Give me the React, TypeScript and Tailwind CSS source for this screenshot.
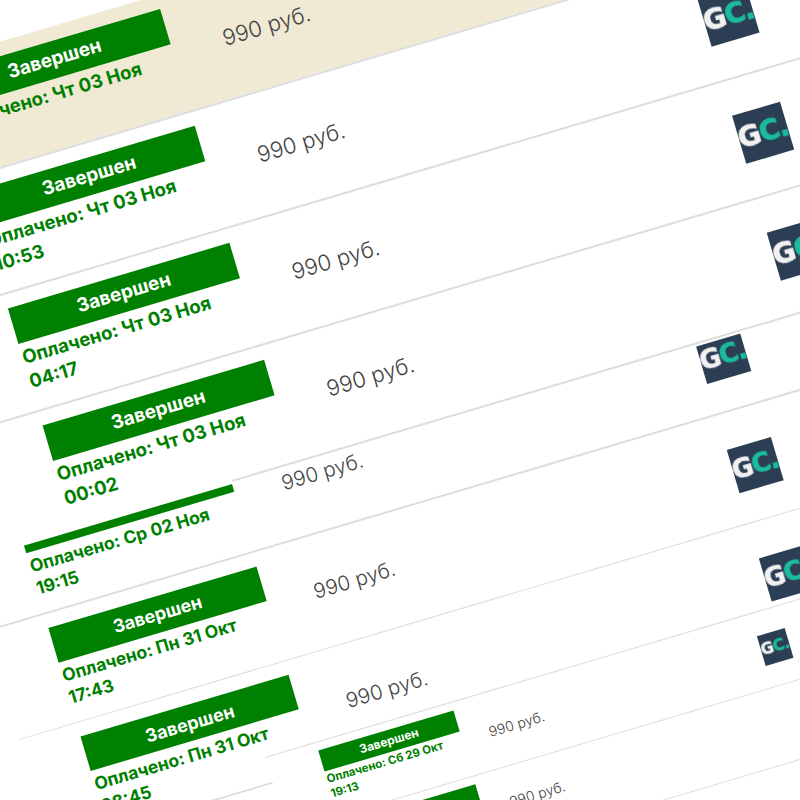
import React from 'react';

type Size = 'large' | 'medium' | 'small';

const SIZES = {
  large: {
    row: 'h-[120px] pl-[220px]',
    info: 'w-[231px] pt-[14px]',
    bar: 'h-[37px] text-[19px]',
    paid: 'mt-[2px] text-[18.6px] leading-[25px]',
    price: 'ml-[52px] w-[466px] text-[22px]',
    logo: 'w-[50px] h-[50px] text-[28px] [-webkit-text-stroke:0.8px_currentColor]',
    logoBox: '',
  },
  medium: {
    row: 'h-[112px] pl-[60px]',
    info: 'w-[217px] pt-[14px]',
    bar: 'h-[36px] text-[18px]',
    paid: 'mt-[2px] text-[17.5px] leading-[23px]',
    price: 'ml-[48px] w-[436px] text-[20.5px]',
    logo: 'w-[46px] h-[45px] text-[26px] [-webkit-text-stroke:0.7px_currentColor]',
    logoBox: 'mt-[5px]',
  },
  small: {
    row: 'h-[76px] pl-[53px]',
    info: 'w-[141px] pt-[8px]',
    bar: 'h-[22px] text-[12px]',
    paid: 'mt-[1px] text-[11.5px] leading-[15px]',
    price: 'ml-[28px] w-[284px] text-[14px]',
    logo: 'w-[29px] h-[31px] text-[16px] [-webkit-text-stroke:0.4px_currentColor]',
    logoBox: '',
  },
};

const Logo: React.FC<{ className: string }> = ({ className }) => (
  <div className={`flex shrink-0 items-center justify-center bg-[#2c3e54] font-bold tracking-[-0.04em] ${className}`} style={{ fontFamily: '"DejaVu Sans", sans-serif' }}>
    <span className="blur-[0.4px] text-[#f1f1f1]">G</span>
    <span className="blur-[0.4px] text-[#1abc9c]">C.</span>
  </div>
);

const Row: React.FC<{ size: Size; status?: string; paid?: string; time?: string; logo?: boolean; tint?: boolean; pull?: string; priceLift?: string }> = ({ size, status = 'Завершен', paid = '', time = '', logo = true, tint, pull = '', priceLift = '' }) => {
  const s = SIZES[size];
  return (
    <div className={`flex items-start ${s.row} ${pull} ${tint ? 'bg-[#f0e9d3]' : ''}`}>
      <div className={`shrink-0 ${s.info}`}>
        <div className={`flex items-center justify-center bg-[#008000] font-bold text-white ${s.bar}`}>{status}</div>
        <div className={`font-bold text-[#008000] whitespace-nowrap ${s.paid}`}>
          <div>Оплачено: {paid}</div>
          <div>{time}</div>
        </div>
      </div>
      <div className={`shrink-0 self-center font-light text-[#444] whitespace-nowrap ${s.price} ${priceLift}`}>990 руб.</div>
      {logo && <div className={`self-center ${s.logoBox}`}><Logo className={s.logo} /></div>}
    </div>
  );
};

const Rule: React.FC<{ className?: string }> = ({ className = '' }) => <div className={`bg-[#dddddd] ${className}`} />;

export default function App() {
  return (
    <div className="relative h-[800px] w-[800px] overflow-hidden bg-white" style={{ fontFamily: 'Inter, "Noto Sans", sans-serif' }}>
      <div className="absolute left-0 top-0 origin-top-left rotate-[-16.5deg]">
        {/* full size sheet */}
        <div className="absolute left-[-300px] top-[40px] w-[1500px]">
          <Row size="large" tint paid="Чт 03 Ноя" />
          <Rule className="h-[2px]" />
          <Row size="large" paid="Чт 03 Ноя" time="10:53" />
          <Rule className="h-[2px]" />
          <Row size="large" paid="Чт 03 Ноя" time="04:17" />
          <Rule className="h-[2px]" />
          <Row size="large" paid="Чт 03 Ноя" time="00:02" />
          <Rule className="ml-[386px] h-[2px]" />
        </div>

        {/* slightly smaller sheet, top row cut off */}
        <div className="absolute left-[-192px] top-[530px] w-[1400px] overflow-hidden bg-white">
          <Row size="medium" status="" pull="-mt-[42px]" paid="Ср 02 Ноя" time="19:15" />
          <Rule className="h-[1.5px]" />
          <Row size="medium" paid="Пн 31 Окт" time="17:43" />
          <Rule className="h-[1.5px]" />
          <Row size="medium" paid="Пн 31 Окт" time="08:45" />
          <Rule className="h-[1.5px]" />
        </div>

        {/* small sheet */}
        <div className="absolute left-[39px] top-[801px] w-[1000px] bg-white">
          <Rule className="h-[1px]" />
          <Row size="small" paid="Сб 29 Окт" time="19:13" />
          <Rule className="h-[1px]" />
          <Row size="small" logo={false} priceLift="mb-[8px]" paid="Сб 29 Окт" time="12:40" />
          <Rule className="h-[1px]" />
          <Row size="small" paid="Сб 29 Окт" time="12:40" />
        </div>
      </div>
    </div>
  );
}
